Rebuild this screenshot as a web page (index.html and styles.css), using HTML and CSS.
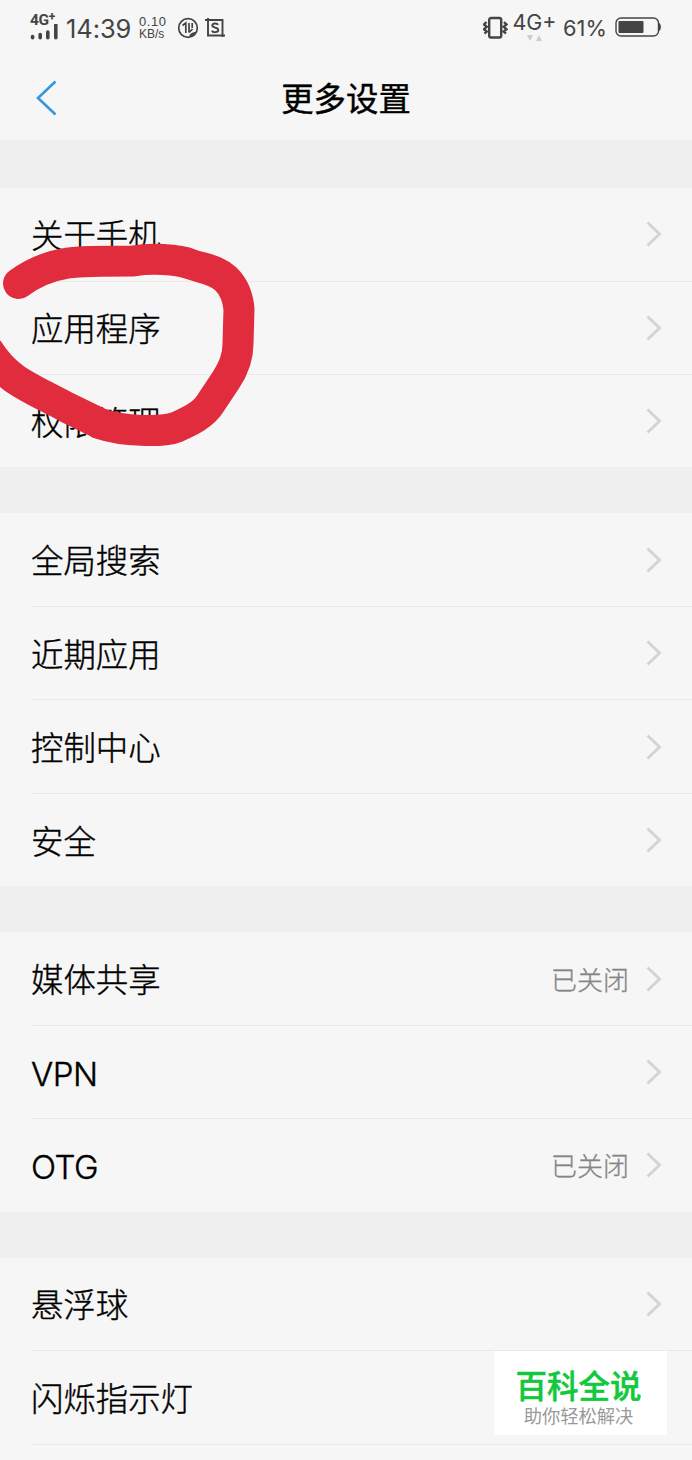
FILE: index.html
```html
<!DOCTYPE html>
<html lang="zh-CN">
<head>
  <meta charset="UTF-8">
  <title>更多设置</title>
  <link rel="stylesheet" href="styles.css">
</head>
<body>

  <div class="phone">
    <div class="status">
      <div class="signal">
        <span class="net">4G<sup>+</sup></span>
        <svg width="28" height="16" viewBox="0 0 28 16">
          <path d="M2.6 12.5v1.2M10.2 10.5v3.2M17.8 8v5.7M25.8 1v12.7" />
        </svg>
      </div>
      <span class="time">14:39</span>
      <div class="speed"><span>0.10</span><span>KB/s</span></div>
      <svg class="ic-data" width="22" height="22" viewBox="0 0 22 22">
        <circle cx="11" cy="11" r="9.3" />
        <path d="M5.500 8.500L8.800 6v10M12 6v9.500M12 15.500l3.500-3.500M15.200 6v5" />
        <path class="fill" d="M12 19.500c1-3 3-4.500 7.500-4.500l-3.500 4z" />
      </svg>
      <svg class="ic-shot" width="22" height="22" viewBox="0 0 22 22">
        <path d="M1 3h17.5v17M4 1v17.5h17" />
        <path d="M14 7.8C13.3 6 8.3 6 8.3 8.6c0 2.7 6 1.5 6 4.4 0 2.8-5.6 2.8-6.4.6" />
      </svg>

      <div class="status-right">
        <svg class="ic-vibrate" width="25" height="24" viewBox="0 0 25 24">
          <rect x="6.2" y="2" width="12" height="19.5" rx="1.8" />
          <path d="M3.5 6L1 8.5l2.8 2.3L1 13.2l2.8 2.4L1.5 17.5M21 6l2.5 2.5-2.8 2.3 2.8 2.4-2.8 2.4 2.3 1.9" />
        </svg>
        <div class="net4g">
          <span>4G+</span>
          <svg width="15" height="6" viewBox="0 0 15 6">
            <path d="M0 0h6L3 6zM9 6h6l-3-6z" />
          </svg>
        </div>
        <span class="percent">61%</span>
        <svg class="ic-battery" width="47" height="20" viewBox="0 0 47 20">
          <rect class="shell" x="1" y="1" width="42.5" height="18" rx="5" />
          <rect class="level" x="3.5" y="4" width="25" height="12" rx="1" />
          <path class="level" d="M44 6c2.5.5 2.5 7.5 0 8z" />
        </svg>
      </div>
    </div>

    <div class="header">
      <svg class="back" width="22" height="36" viewBox="0 0 22 36">
        <path d="M19.5 1.5L2 18l17.5 16.5" />
      </svg>
      <h1>更多设置</h1>
    </div>

    <div class="group">
      <div class="row"><span class="label">关于手机</span><svg class="arrow" viewBox="0 0 16 26"><path d="M1.5 1.5L13.5 13l-12 11.5" /></svg></div>
      <div class="row"><span class="label">应用程序</span><svg class="arrow" viewBox="0 0 16 26"><path d="M1.5 1.5L13.5 13l-12 11.5" /></svg></div>
      <div class="row"><span class="label">权限管理</span><svg class="arrow" viewBox="0 0 16 26"><path d="M1.5 1.5L13.5 13l-12 11.5" /></svg></div>
    </div>

    <div class="group">
      <div class="row"><span class="label">全局搜索</span><svg class="arrow" viewBox="0 0 16 26"><path d="M1.5 1.5L13.5 13l-12 11.5" /></svg></div>
      <div class="row"><span class="label">近期应用</span><svg class="arrow" viewBox="0 0 16 26"><path d="M1.5 1.5L13.5 13l-12 11.5" /></svg></div>
      <div class="row"><span class="label">控制中心</span><svg class="arrow" viewBox="0 0 16 26"><path d="M1.5 1.5L13.5 13l-12 11.5" /></svg></div>
      <div class="row"><span class="label">安全</span><svg class="arrow" viewBox="0 0 16 26"><path d="M1.5 1.5L13.5 13l-12 11.5" /></svg></div>
    </div>

    <div class="group">
      <div class="row"><span class="label">媒体共享</span><span class="value">已关闭</span><svg class="arrow" viewBox="0 0 16 26"><path d="M1.5 1.5L13.5 13l-12 11.5" /></svg></div>
      <div class="row"><span class="label latin">VPN</span><svg class="arrow" viewBox="0 0 16 26"><path d="M1.5 1.5L13.5 13l-12 11.5" /></svg></div>
      <div class="row"><span class="label latin">OTG</span><span class="value">已关闭</span><svg class="arrow" viewBox="0 0 16 26"><path d="M1.5 1.5L13.5 13l-12 11.5" /></svg></div>
    </div>

    <div class="group">
      <div class="row"><span class="label">悬浮球</span><svg class="arrow" viewBox="0 0 16 26"><path d="M1.5 1.5L13.5 13l-12 11.5" /></svg></div>
      <div class="row"><span class="label">闪烁指示灯</span></div>
      <div class="row"></div>
    </div>

    <!-- marcador vermelho -->
    <svg class="marker" width="270" height="230" viewBox="0 230 270 230">
      <path d="M18.5 283.5C34 272 49 266 68 263C82 261 105 261 133 261C150 258 178 259 190 264C204 269 215 269 226 279C234 287 238 298 239 309L238 344C238 358 234 368 226 380L210 404C203 415 190 421 177 427C162 433 122 431 101 424L66 407C50 398 31 390 15 379C5 372-3 364-12 350" />
    </svg>

    <div class="badge">
      <strong>百科全说</strong>
      <span>助你轻松解决</span>
    </div>
  </div>

</body>
</html>
```
FILE: styles.css
```css
* {
  box-sizing: border-box;
}

body {
  margin: 0;
  background-color: #efefef;
  font-family: "Noto Sans CJK SC", sans-serif;
  color: #000;
}

.phone {
  position: relative;
  width: 692px;
  height: 1460px;
  overflow: hidden;
}

svg {
  display: block;
  fill: none;
  flex-shrink: 0;
}

/* barra de status */
.status {
  display: flex;
  align-items: center;
  height: 56px;
  padding: 0 30px;
  background-color: #f6f6f6;
  color: #444;
  font-family: Roboto, sans-serif;
  stroke: #444;
}

.status span {
  stroke: none;
}

.signal {
  width: 28px;
  height: 26px;
  margin-top: -2px;
}

.signal svg {
  margin-top: -3px;
  stroke-width: 3.6;
  stroke-linecap: round;
}

.net {
  display: block;
  height: 13px;
  font-size: 15.5px;
  font-weight: bold;
  line-height: 13px;
  letter-spacing: -0.3px;
  white-space: nowrap;
}

.net sup {
  font-size: 12px;
  line-height: 0;
  vertical-align: 4px;
}

.time {
  margin-left: 8px;
  width: 66px;
  font-family: Inter, sans-serif;
  font-size: 25.5px;
  letter-spacing: -0.1px;
}

.speed {
  display: flex;
  flex-direction: column;
  width: 31px;
  margin-left: 7px;
  font-family: "Liberation Sans", sans-serif;
  font-size: 12px;
  line-height: 13px;
}

.speed span:first-child {
  font-size: 13px;
  letter-spacing: 0.6px;
}

.ic-data {
  margin-left: 7px;
  stroke-width: 1.7;
}

.ic-data .fill {
  fill: #444;
  stroke: none;
}

.ic-shot {
  margin-left: 5px;
  stroke-width: 1.9;
}

.status-right {
  display: flex;
  align-items: center;
  margin-left: auto;
}

.ic-vibrate {
  stroke-width: 2.4;
}

.net4g {
  display: flex;
  flex-direction: column;
  align-items: center;
  width: 43px;
  margin-top: -4px;
  margin-left: 5px;
  font-family: Inter, sans-serif;
  font-size: 21.5px;
  line-height: 23px;
}

.net4g svg {
  margin-top: 1px;
  fill: #ccc;
  stroke: none;
}

.percent {
  width: 44px;
  margin-left: 7px;
  font-family: Inter, sans-serif;
  font-size: 21.8px;
}

.ic-battery {
  margin-left: 8px;
  margin-top: -2px;
}

.shell {
  stroke-width: 1.4;
}

.level {
  fill: #444;
  stroke: none;
}

.header {
  display: grid;
  grid-template-columns: 100px 1fr 100px;
  align-items: center;
  height: 84px;
  background-color: #f6f6f6;
}

.back {
  margin-left: 36px;
  stroke: #3797dc;
  stroke-width: 2.6;
}

.header h1 {
  margin: 0;
  padding-bottom: 3px;
  font-size: 32.4px;
  font-weight: 400;
  line-height: 48px;
  text-align: center;
  -webkit-text-stroke: 0.4px #000;
}

/* grupos da lista */
.group {
  margin-top: 46px;
  background-color: #f6f6f6;
}

.header + .group {
  margin-top: 48px;
}

.row {
  display: flex;
  align-items: center;
  height: 93.5px;
  margin-left: 31px;
  padding-right: 30px;
  border-bottom: 1px solid #e9e9e9;
}

.row:last-child {
  height: 92.4px;
  border-bottom: none;
}

.label {
  flex: 1;
  padding-bottom: 1px;
  font-size: 32.4px;
  font-weight: 300;
  line-height: 48px;
  -webkit-text-stroke: 0.4px #000;
}

.latin {
  padding-top: 4px;
  padding-bottom: 0;
  font-family: Inter, "Noto Sans CJK SC", sans-serif;
  font-size: 33px;
  letter-spacing: -0.5px;
}

.value {
  padding-bottom: 1px;
  margin-right: 17px;
  color: #858585;
  font-size: 26px;
  font-weight: 300;
  -webkit-text-stroke: 0.3px #858585;
}

.arrow {
  width: 16px;
  height: 26px;
  stroke: #d3d3d3;
  stroke-width: 2.8;
}

.marker {
  position: absolute;
  top: 230px;
  left: 0;
  stroke: #e12c3d;
  stroke-width: 31;
  stroke-linecap: round;
  stroke-linejoin: round;
}

.badge {
  position: absolute;
  left: 494px;
  top: 1351px;
  display: flex;
  flex-direction: column;
  align-items: center;
  width: 173px;
  height: 84px;
  padding: 16px 4px 0 0;
  background-color: #fff;
}

.badge strong {
  color: #12c83c;
  font-size: 31.5px;
  font-weight: 500;
  line-height: 35px;
  -webkit-text-stroke: 0.5px #12c83c;
}

.badge span {
  color: #999;
  font-size: 18.3px;
  line-height: 26px;
}
```
